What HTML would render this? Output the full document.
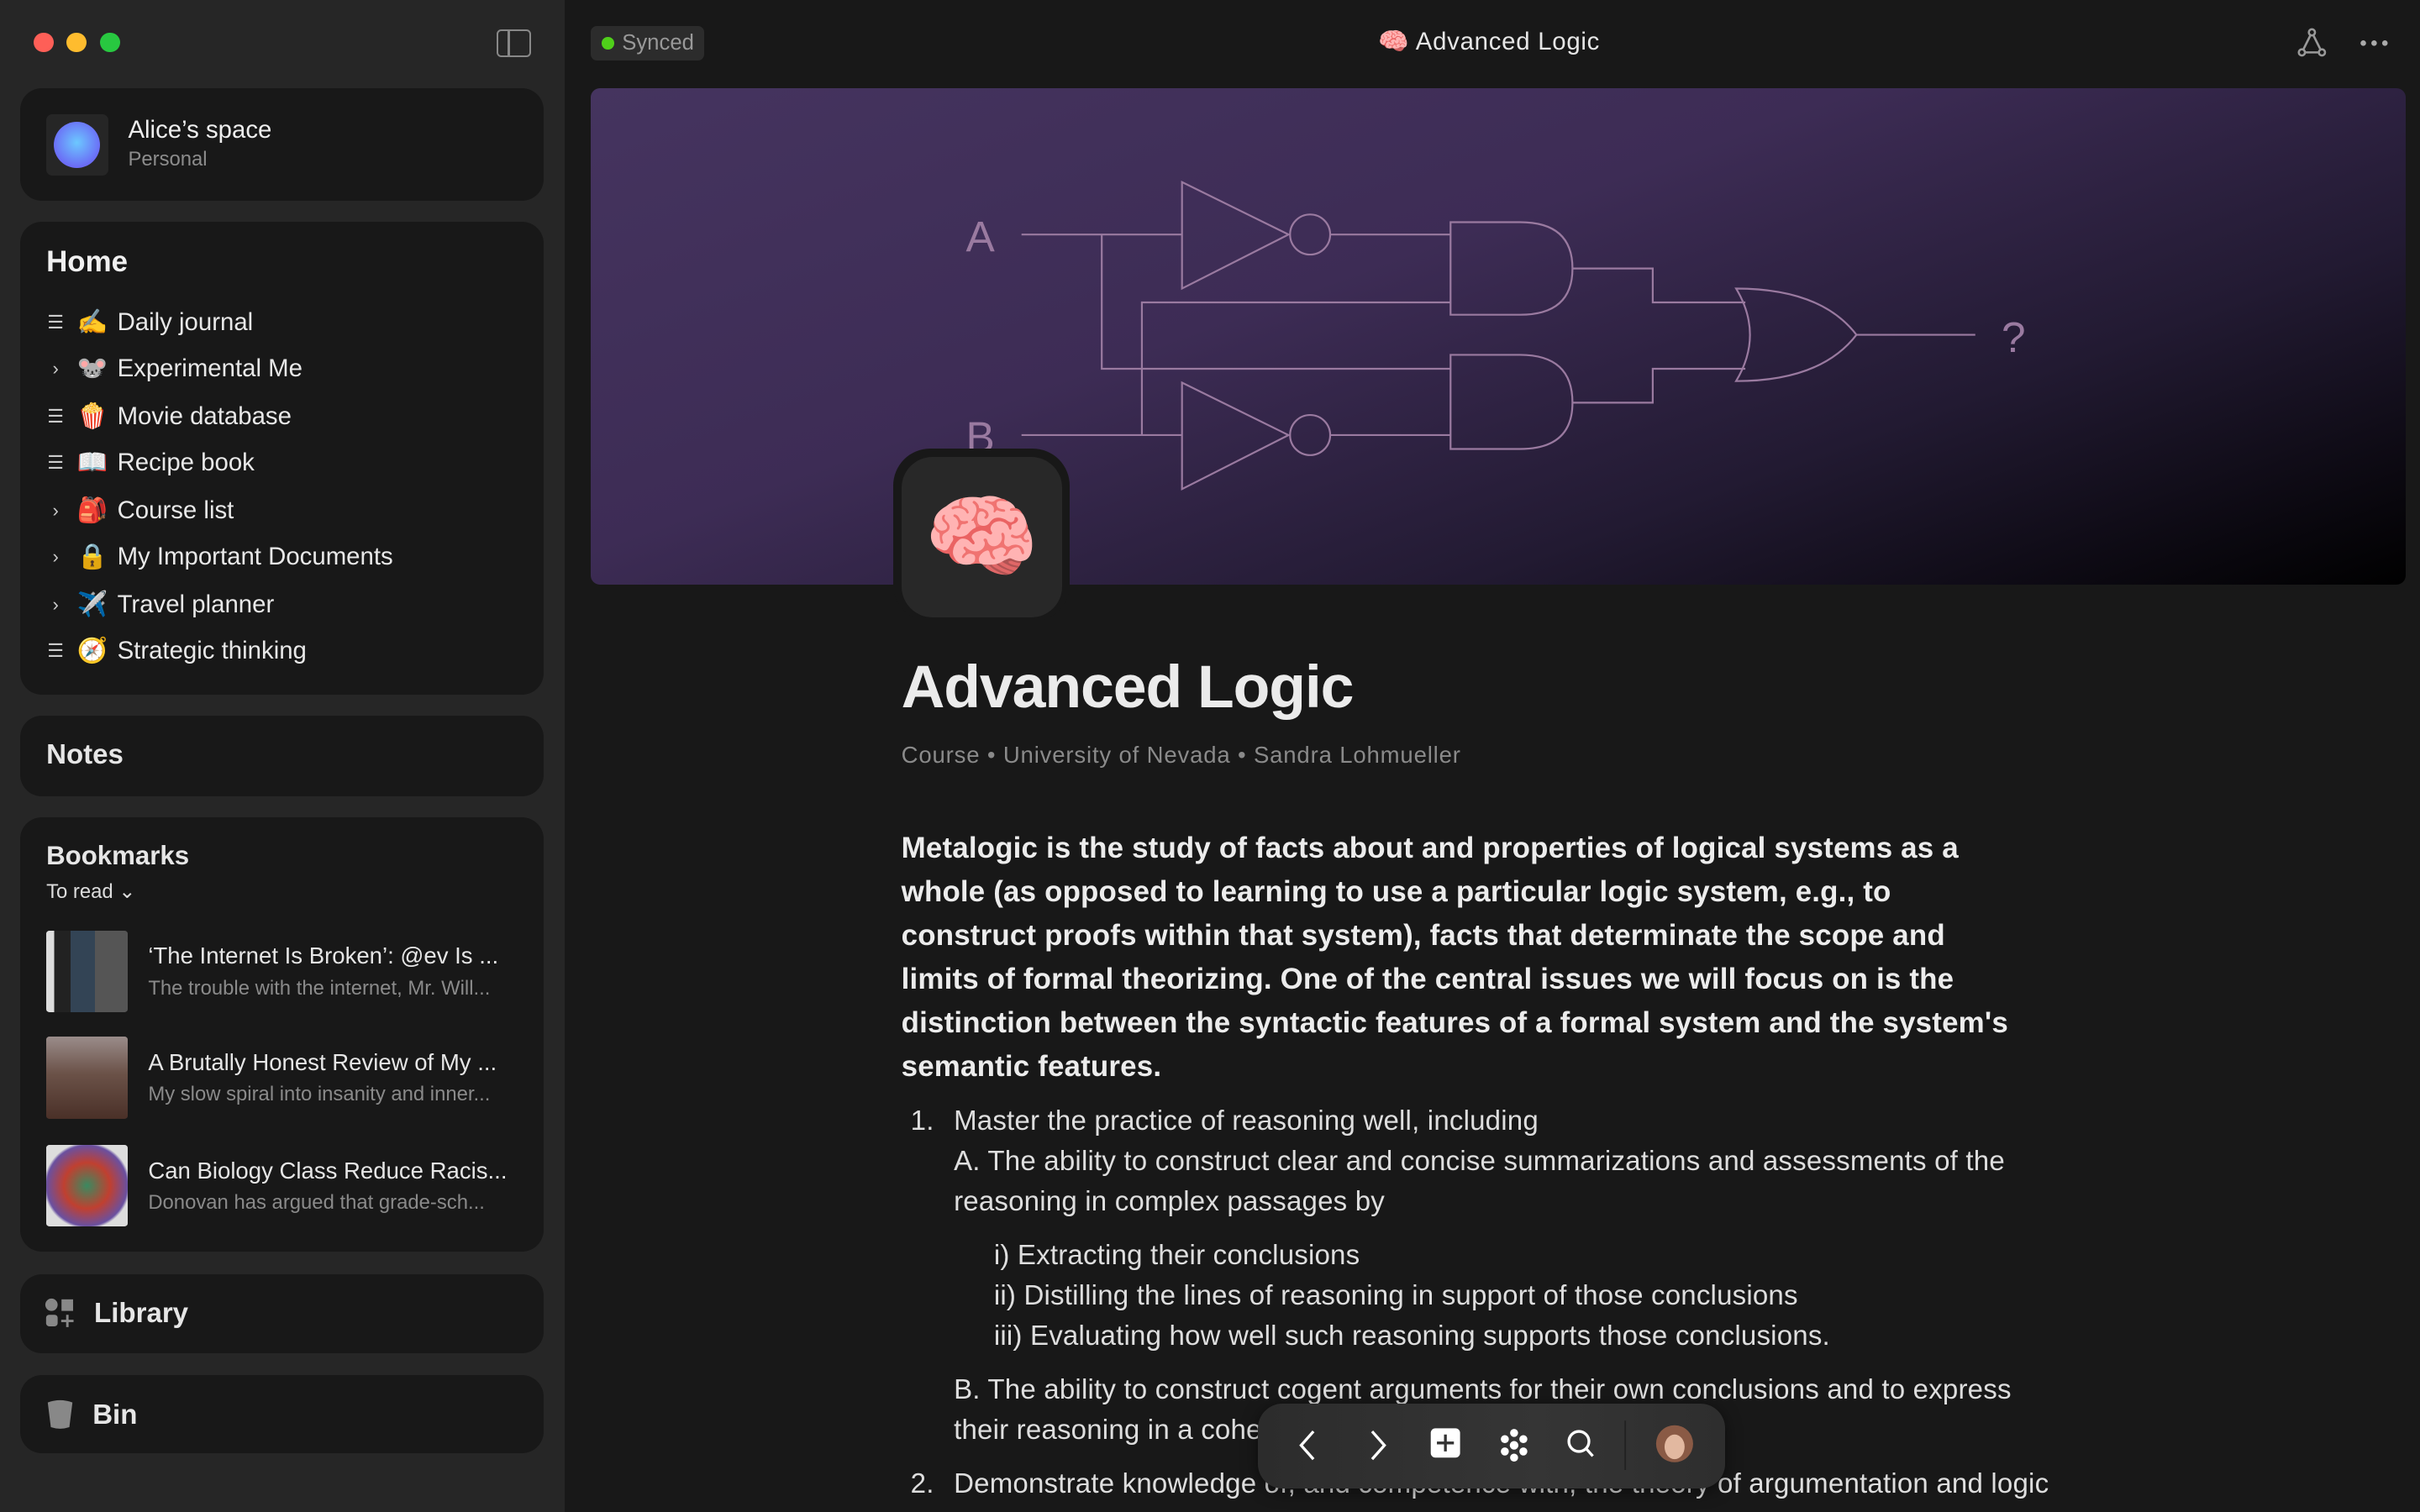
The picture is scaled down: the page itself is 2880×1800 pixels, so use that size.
<!DOCTYPE html>
<html><head><meta charset="utf-8"><style>
*{box-sizing:border-box;margin:0;padding:0}
html,body{width:2880px;height:1800px;overflow:hidden;background:#181818}
#r{zoom:1.836735;width:1568px;height:980px;position:relative;font-family:"Liberation Sans","Noto Sans CJK SC",sans-serif;color:#e6e6e6;overflow:hidden}
.a{position:absolute}
#side{left:0;top:0;width:366px;height:980px;background:#262626}
.card{position:absolute;left:13px;width:339px;background:#181818;border-radius:14px}
.dot{position:absolute;top:21px;width:13px;height:13px;border-radius:50%}
.it{position:absolute;left:28px;height:24px;font-size:16px;display:flex;align-items:center;color:#e8e8e8;white-space:nowrap}
.it .ic{width:16px;color:#ccc;font-size:12px;text-align:center}
.it .em{width:28px;text-align:center;font-size:16px;margin-left:2px;margin-right:2px}
.bm{position:absolute;left:17px;width:320px;height:54px}
.bm .th{position:absolute;left:0;top:0;width:53px;height:53px;border-radius:2px}
.bm .t1{position:absolute;left:66px;top:8px;font-size:15px;color:#e6e6e6;white-space:nowrap}
.bm .t2{position:absolute;left:66px;top:30px;font-size:13px;color:#8a8a8a;white-space:nowrap}
#main{left:366px;top:0;width:1202px;height:980px}
.txt{font-size:18px;color:#dedede;line-height:26px;white-space:nowrap;letter-spacing:0.1px}
</style></head><body><div id="r">
<div id="side" class="a">
 <div class="dot" style="left:22px;background:#fe5f57"></div>
 <div class="dot" style="left:43px;background:#febc2e"></div>
 <div class="dot" style="left:65px;background:#28c840"></div>
 <div class="a" style="left:322px;top:19px;width:22px;height:18px;border:1.6px solid #888;border-radius:3px"><div style="position:absolute;left:6px;top:0;width:1.6px;height:100%;background:#888"></div></div>
 <div class="card" style="top:57px;height:73px">
  <div class="a" style="left:17px;top:17px;width:40px;height:40px;background:#262626;border-radius:4px"></div>
  <div class="a" style="left:22px;top:22px;width:30px;height:30px;border-radius:50%;background:radial-gradient(circle at 50% 45%,#6cc8ff,#6b6cf6 70%)"></div>
  <div class="a" style="left:70px;top:18px;font-size:16px;color:#eee">Alice’s space</div>
  <div class="a" style="left:70px;top:39px;font-size:13px;color:#8c8c8c">Personal</div>
 </div>
 <div class="card" style="top:144px;height:306px">
  <div class="a" style="left:17px;top:15px;font-size:19px;font-weight:bold;color:#f0f0f0">Home</div>
 </div>
 <div class="it" style="top:197px"><span class="ic">☰</span><span class="em">✍️</span>Daily journal</div>
 <div class="it" style="top:227px"><span class="ic">›</span><span class="em">🐭</span>Experimental Me</div>
 <div class="it" style="top:258px"><span class="ic">☰</span><span class="em">🍿</span>Movie database</div>
 <div class="it" style="top:288px"><span class="ic">☰</span><span class="em">📖</span>Recipe book</div>
 <div class="it" style="top:319px"><span class="ic">›</span><span class="em">🎒</span>Course list</div>
 <div class="it" style="top:349px"><span class="ic">›</span><span class="em">🔒</span>My Important Documents</div>
 <div class="it" style="top:380px"><span class="ic">›</span><span class="em">✈️</span>Travel planner</div>
 <div class="it" style="top:410px"><span class="ic">☰</span><span class="em">🧭</span>Strategic thinking</div>
 <div class="card" style="top:464px;height:52px"><div class="a" style="left:17px;top:15px;font-size:18px;font-weight:bold">Notes</div></div>
 <div class="card" style="top:530px;height:281px">
  <div class="a" style="left:17px;top:15px;font-size:17px;font-weight:bold">Bookmarks</div>
  <div class="a" style="left:17px;top:40px;font-size:13px;color:#ddd">To read ⌄</div>
  <div class="bm" style="top:73px"><div class="th" style="background:linear-gradient(90deg,#ddd 0 10%,#222 10% 30%,#345 30% 60%,#555 60%)"></div><div class="t1">‘The Internet Is Broken’: @ev Is ...</div><div class="t2">The trouble with the internet, Mr. Will...</div></div>
  <div class="bm" style="top:142px"><div class="th" style="background:linear-gradient(180deg,#9a8c8a,#6b5248 45%,#4a3028)"></div><div class="t1">A Brutally Honest Review of My ...</div><div class="t2">My slow spiral into insanity and inner...</div></div>
  <div class="bm" style="top:212px"><div class="th" style="background:radial-gradient(circle at 50% 50%,#3a8a60,#c04030 40%,#6a50a0 70%,#ddd 75%)"></div><div class="t1">Can Biology Class Reduce Racis...</div><div class="t2">Donovan has argued that grade-sch...</div></div>
 </div>
 <div class="card" style="top:826px;height:51px">
  <svg class="a" style="left:16px;top:15px" width="20" height="20" viewBox="0 0 20 20"><circle cx="4.5" cy="4.5" r="4" fill="#888"/><rect x="11" y="1" width="7.5" height="7.5" fill="#888"/><rect x="1" y="11" width="7.5" height="7.5" rx="2" fill="#888"/><path d="M14.8 11v8M10.8 15h8" stroke="#888" stroke-width="1.6"/></svg>
  <div class="a" style="left:48px;top:15px;font-size:18px;font-weight:bold">Library</div>
 </div>
 <div class="card" style="top:891px;height:51px">
  <svg class="a" style="left:17px;top:16px" width="18" height="20" viewBox="0 0 18 20"><path d="M1 2 Q9 -1 17 2 L15 18 Q9 20 3 18Z" fill="#888"/></svg>
  <div class="a" style="left:47px;top:16px;font-size:18px;font-weight:bold">Bin</div>
 </div>
</div>
<div id="main" class="a">
 <div class="a" style="left:17px;top:17px;width:73px;height:22px;background:#2c2c2c;border-radius:4px;font-size:14px;color:#999;padding:3px 0 0 20px">Synced<div class="a" style="left:7px;top:7px;width:8px;height:8px;border-radius:50%;background:#4fcf1a"></div></div>
 <div class="a" style="left:527px;top:18px;font-size:16px;color:#e6e6e6;letter-spacing:0.4px">🧠 Advanced Logic</div>
 <svg class="a" style="left:1122px;top:18px" width="20" height="20" viewBox="0 0 20 20" fill="none" stroke="#999" stroke-width="1.4"><path d="M10 3L3.5 16H16.5Z"/><circle cx="10" cy="3" r="2" fill="#181818"/><circle cx="3.5" cy="16" r="2" fill="#181818"/><circle cx="16.5" cy="16" r="2" fill="#181818"/></svg>
 <svg class="a" style="left:1162px;top:24px" width="20" height="8" viewBox="0 0 20 8" fill="#aaa"><circle cx="3" cy="4" r="1.8"/><circle cx="10" cy="4" r="1.8"/><circle cx="17" cy="4" r="1.8"/></svg>
 <div class="a" style="left:17px;top:57px;width:1176px;height:322px;border-radius:6px;background:linear-gradient(160deg,#45345f 0%,#3d2c55 40%,#221a32 70%,#000 100%)"></div>
 <svg class="a" style="left:0;top:0" width="1202" height="400" viewBox="366 0 1202 400" fill="none" stroke="#9a7aa0" stroke-width="1.2">
  <path d="M662 152H766M766 118L835 152L766 187Z M862 152H940M714 152V239H940M740 282V196H940M662 282H766M766 248L835 282L766 317Z M862 282H940"/>
  <circle cx="849" cy="152" r="13"/><circle cx="849" cy="282" r="13"/>
  <path d="M940 144H985Q1019 144 1019 174Q1019 204 985 204H940Z"/>
  <path d="M940 230H985Q1019 230 1019 261Q1019 291 985 291H940Z"/>
  <path d="M1019 174H1071V196H1131M1019 261H1071V239H1131"/>
  <path d="M1125 187Q1180 187 1203 217Q1180 247 1125 247Q1143 217 1125 187Z"/>
  <path d="M1203 217H1280"/>
  <text x="626" y="163" fill="#9a7aa0" stroke="none" font-size="28" font-family="Liberation Sans">A</text>
  <text x="626" y="293" fill="#9a7aa0" stroke="none" font-size="28" font-family="Liberation Sans">B</text>
  <text x="1297" y="228" fill="#9a7aa0" stroke="none" font-size="28" font-family="Liberation Sans">?</text>
 </svg>
 <div class="a" style="left:213px;top:291px;width:114px;height:112px;background:#181818;border-radius:24px"></div>
 <div class="a" style="left:218px;top:296px;width:104px;height:104px;background:#282828;border-radius:20px;font-size:60px;text-align:center;line-height:104px">🧠</div>
 <div class="a" style="left:218px;top:423px;font-size:39px;font-weight:bold;color:#ebebeb;letter-spacing:-0.6px">Advanced Logic</div>
 <div class="a" style="left:218px;top:481px;font-size:15px;color:#8a8a8a;letter-spacing:0.45px">Course • University of Nevada • Sandra Lohmueller</div>
 <div class="a" style="left:218px;top:536px;font-size:19px;font-weight:bold;line-height:28.3px;color:#ececec;white-space:nowrap;letter-spacing:0.1px">Metalogic is the study of facts about and properties of logical systems as a<br>whole (as opposed to learning to use a particular logic system, e.g., to<br>construct proofs within that system), facts that determinate the scope and<br>limits of formal theorizing. One of the central issues we will focus on is the<br>distinction between the syntactic features of a formal system and the system's<br>semantic features.</div>
 <div class="a txt" style="left:224px;top:714px">1.</div>
 <div class="a txt" style="left:252px;top:714px">Master the practice of reasoning well, including<br>A. The ability to construct clear and concise summarizations and assessments of the<br>reasoning in complex passages by</div>
 <div class="a txt" style="left:278px;top:801px">i) Extracting their conclusions<br>ii) Distilling the lines of reasoning in support of those conclusions<br>iii) Evaluating how well such reasoning supports those conclusions.</div>
 <div class="a txt" style="left:252px;top:888px">B. The ability to construct cogent arguments for their own conclusions and to express<br>their reasoning in a coherent manner.</div>
 <div class="a txt" style="left:224px;top:949px">2.</div>
 <div class="a txt" style="left:252px;top:949px">Demonstrate knowledge of, and competence with, the theory of argumentation and logic</div>
 <div class="a" style="left:449px;top:910px;width:303px;height:55px;border-radius:16px;background:linear-gradient(90deg,#2c2c2c,#353535 60%,#2e2e2e);box-shadow:0 2px 10px rgba(0,0,0,.5)"></div>
 <svg class="a" style="left:449px;top:910px" width="303" height="55" viewBox="0 0 303 55" fill="none" stroke="#fff" stroke-width="1.8">
  <path d="M36 18L28 27L36 36M74 18L82 27L74 36"/>
  <rect x="112" y="16" width="19" height="19" rx="3" fill="#fff" stroke="none"/><path d="M121.5 20v11M116 25.5h11" stroke="#333"/>
  <g fill="#fff" stroke="none"><circle cx="166" cy="19" r="2.6"/><circle cx="166" cy="35" r="2.6"/><circle cx="160" cy="23" r="2.6"/><circle cx="172" cy="23" r="2.6"/><circle cx="160" cy="31" r="2.6"/><circle cx="172" cy="31" r="2.6"/><circle cx="166" cy="27" r="2.8"/></g>
  <circle cx="208" cy="24.5" r="6.5"/><path d="M213 29.5L217 34"/>
  <path d="M238 11V43" stroke="#222" stroke-width="1"/>
  <circle cx="270" cy="26" r="12" fill="#8a5a45" stroke="none"/><ellipse cx="270" cy="28" rx="6.5" ry="8" fill="#e2b8a0" stroke="none"/>
 </svg>
</div>
</div></body></html>
